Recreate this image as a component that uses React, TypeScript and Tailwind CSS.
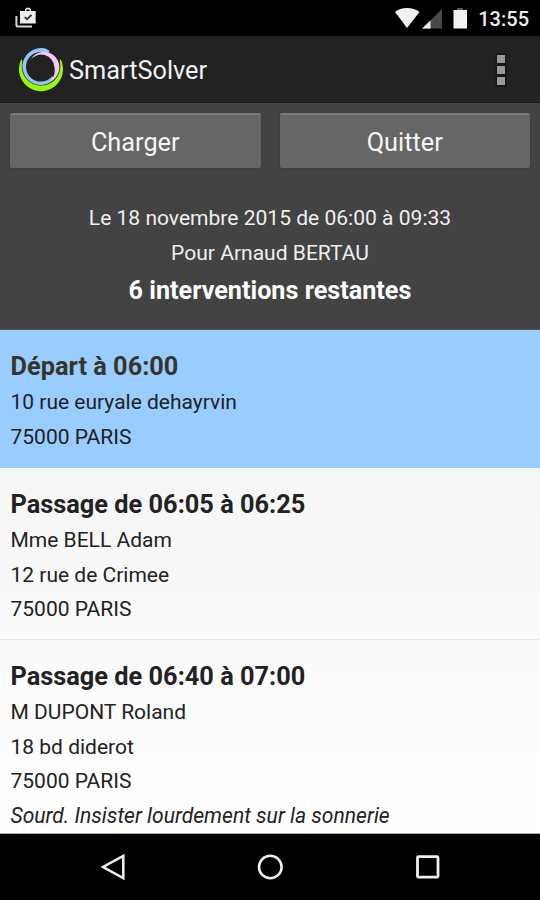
import React from 'react'

type Stop = {
    title: string
    lines: string[]
    note?: string
}

const departure: Stop = {
    title: 'Départ à 06:00',
    lines: ['10 rue euryale dehayrvin', '75000 PARIS'],
}

const stops: Stop[] = [
    {
        title: 'Passage de 06:05 à 06:25',
        lines: ['Mme BELL Adam', '12 rue de Crimee', '75000 PARIS'],
    },
    {
        title: 'Passage de 06:40 à 07:00',
        lines: ['M DUPONT Roland', '18 bd diderot', '75000 PARIS'],
        note: 'Sourd. Insister lourdement sur la sonnerie',
    },
]

const StatusBar = () => (
    <div className="flex h-9 items-center justify-between bg-black pl-[14px] pr-[11px]">
        <svg width="24" height="24" viewBox="0 0 24 24">
            <path d="M2.400 10v9a1.500 1.500 0 0 0 1.500 1.500H18" fill="none" stroke="#d8d8d8" strokeWidth="2" />
            <path
                fillRule="evenodd"
                fill="#ededed"
                d="M6 5h5V3.200L12.300 1.800h3.400L17 3.200V5h4.700v12.500H6zM12.500 5h3V3.400h-3z"
            />
            <path d="M10.700 11l2.300 2.200 4.500-4.300" fill="none" stroke="#333" strokeWidth="1.700" />
        </svg>
        <div className="flex items-center">
            <svg width="82" height="24" viewBox="0 0 82 24">
                <path d="M6 6C12 .8 24 .8 30.500 6L18 22z" fill="#f2f2f2" />
                <path d="M53 3v19.500H33z" fill="#484848" />
                <path d="M41.500 14.500v8H33z" fill="#f2f2f2" />
                <path d="M68 2h6v2h-6z" fill="#555" />
                <path d="M64.500 4h13.500v18.500H64.500z" fill="#f2f2f2" />
            </svg>
            <span className="ml-[7px] pt-[2px] text-[20px] font-medium leading-6 text-[#ececec]">13:55</span>
        </div>
    </div>
)

const Logo = () => (
    <svg width="46" height="46" viewBox="0 0 46 46">
        {/* green crescent */}
        <path d="M3.500 13A22 22 0 1 0 42.500 13L38 24H8z" fill="#98f80c" />
        <circle cx="23" cy="20.300" r="19.300" fill="#222" />
        {/* blue ring, open on the right */}
        <circle cx="22.800" cy="20.800" r="16.500" fill="none" stroke="#91c4f4" strokeWidth="3.400" strokeDasharray="74 200" transform="rotate(40 22.800 20.800)" />
        <path d="M30 3.500A18.500 18.500 0 0 0 6 28A16 16 0 0 1 18 6.500Q23 4.500 30 3.500z" fill="#91c4f4" />
        {/* pink ring */}
        <path
            fill="#f6c9f5"
            d="M12 14.500A15.500 15.500 0 1 1 31 36A15.500 15.500 0 0 0 36.500 21.500 13.400 13.400 0 0 0 12 14.500z"
        />
    </svg>
)

const ActionBar = () => (
    <div className="flex h-[67px] items-center border-b border-[#1a1a1a] bg-[#222] pl-[18px] pr-[35px]">
        <Logo />
        <span className="ml-[5px] pt-[4px] text-[25.300px] leading-8 text-[#f0f0f0]">SmartSolver</span>
        <div className="ml-auto flex flex-col gap-[3px] pt-px">
            <span className="h-[8px] w-[8px] bg-[#999] shadow-[0_0_2px_1px_#111]" />
            <span className="h-[8px] w-[8px] bg-[#999] shadow-[0_0_2px_1px_#111]" />
            <span className="h-[8px] w-[8px] bg-[#999] shadow-[0_0_2px_1px_#111]" />
        </div>
    </div>
)

const ActionButton = ({ label }: { label: string }) => (
    <button className="h-[55px] flex-1 rounded-[2px] border-t-2 border-[#7a7a7a] bg-[#666] pt-[3px] text-[25.300px] leading-8 text-[#f5f5f5] shadow-[0_0_2px_#333]">
        {label}
    </button>
)

const StopRow = ({ stop, titleClass = 'text-[#222]' }: { stop: Stop; titleClass?: string }) => (
    <div className="pl-[10.500px] pt-[18px] text-[21px] leading-[34.500px] text-[#222]">
        <div className={`h-[37px] text-[25.350px] font-bold leading-[37px] ${titleClass}`}>{stop.title}</div>
        {stop.lines.map((line) => (
            <div key={line}>{line}</div>
        ))}
        {stop.note && <div className="text-[21.100px] italic">{stop.note}</div>}
    </div>
)

const App = () => {
    return (
        <div className="flex h-[900px] w-[540px] flex-col overflow-hidden bg-black font-['Roboto',sans-serif]">
            <StatusBar />
            <ActionBar />

            {/* Buttons and day summary */}
            <div className="h-[227px] border-b border-[#555] bg-[#434343] px-[10px] pt-[10px]">
                <div className="flex gap-[19px]">
                    <ActionButton label="Charger" />
                    <ActionButton label="Quitter" />
                </div>
                <div className="pt-[33px] text-center text-[21.050px] leading-[34.500px] text-[#efefef]">
                    <div>Le 18 novembre 2015 de 06:00 à 09:33</div>
                    <div>Pour Arnaud BERTAU</div>
                    <div className="text-[25.200px] font-bold leading-[42px] text-white">6 interventions restantes</div>
                </div>
            </div>

            {/* Itinerary */}
            <div className="h-[138px] bg-[#99ccff]">
                <StopRow stop={departure} titleClass="text-[#35352b]" />
            </div>
            <div className="h-[366px] border-b border-[#aaa] bg-gradient-to-b from-[#f6f6f6] to-white">
                <div className="h-[172px] border-b border-[#e8e8e8]">
                    <StopRow stop={stops[0]} />
                </div>
                <StopRow stop={stops[1]} />
            </div>

            {/* System navigation */}
            <div className="flex h-[66px] items-center justify-between bg-black px-[98px]">
                <svg width="30" height="30" viewBox="0 0 30 30" fill="none" stroke="#f0f0f0" strokeWidth="2.500">
                    <path d="M25.300 3.800v22.400L5 15z" />
                </svg>
                <svg width="30" height="30" viewBox="0 0 30 30" fill="none" stroke="#f0f0f0" strokeWidth="2.500">
                    <circle cx="15.300" cy="15" r="11.300" />
                </svg>
                <svg width="30" height="30" viewBox="0 0 30 30" fill="none" stroke="#f0f0f0" strokeWidth="2.800">
                    <rect x="5.500" y="4.700" width="20.500" height="20.500" rx="1" />
                </svg>
            </div>
        </div>
    )
}

export default App
